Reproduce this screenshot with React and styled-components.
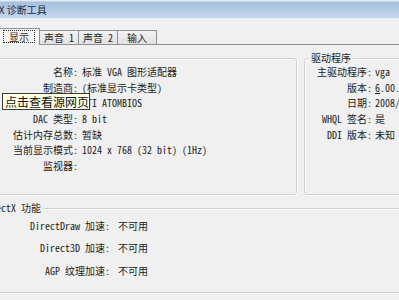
import React from 'react';
import styled, { createGlobalStyle } from 'styled-components';

const Global = createGlobalStyle`
  html, body { margin: 0; padding: 0; background: #f0f0f0; }
  body { font-family: "Noto Sans Mono CJK SC", "Noto Sans CJK SC", monospace; }
`;

const Screen = styled.div`
  position: relative;
  width: 399px;
  height: 300px;
  overflow: hidden;
  background: #f0f0f0;
  font-family: "Noto Sans Mono CJK SC", "Noto Sans CJK SC", monospace;
  font-size: 10px;
  color: #1c1c1c;
`;

const TitleBar = styled.div`
  height: 18px;
  display: flex;
  align-items: center;
  background: linear-gradient(#e2eaf4 0, #e2eaf4 1px, #a5c0e0 2px, #b2c9e5 9px, #c6d7ec 18px);
`;

const TitleText = styled.span`
  margin-left: -29px;
  font-family: "Noto Sans CJK SC", sans-serif;
  font-size: 10px;
  color: #1d2738;
  white-space: nowrap;
`;

const Client = styled.div`
  padding-top: 11px;
  background: linear-gradient(#eef1f5, #f0f0f0 11px);
`;

const TabStrip = styled.div`
  display: flex;
  align-items: flex-end;
  height: 16px;
  margin-left: -2px;
  position: relative;
  z-index: 1;
  margin-bottom: -1px;
`;

const Tab = styled.div`
  box-sizing: border-box;
  width: ${p => (p.$active ? 42 : 40)}px;
  height: ${p => (p.$active ? 17 : 15)}px;
  margin-left: ${p => (p.$active ? 0 : -1)}px;
  display: flex;
  align-items: center;
  justify-content: center;
  border: 1px solid #8d9095;
  border-bottom: ${p => (p.$active ? '1px solid #f7f7f7' : '1px solid #8d9095')};
  background: ${p => (p.$active ? '#f7f7f7' : 'linear-gradient(#f3f3f3, #e1e1e1)')};
  white-space: nowrap;
  padding-bottom: 1px;
`;

const Focus = styled.span`
  outline: 1px dotted #222;
  padding: 0 5px;
  line-height: 11px;
`;

const Panel = styled.div`
  border-top: 1px solid #8d9095;
  background: #f0f0f0;
  padding-top: 13px;
  height: 255px;
`;

const TopRow = styled.div`
  display: flex;
  gap: 7px;
  margin-left: -10px;
`;

const GroupBox = styled.div`
  position: relative;
  box-sizing: border-box;
  flex: none;
  width: ${p => p.$w}px;
  border: 1px solid #d2d2d2;
  border-radius: 3px;
  box-shadow: inset 1px 1px 0 #fbfbfb, 1px 1px 0 #fbfbfb;
  padding: ${p => p.$pad};
`;

const Caption = styled.span`
  position: absolute;
  top: -8px;
  left: ${p => p.$left}px;
  padding: 0 2px;
  background: #f0f0f0;
  white-space: nowrap;
  line-height: 14px;
`;

const Fields = styled.div`
  display: grid;
  grid-template-columns: ${p => p.$labelW}px max-content;
  column-gap: ${p => p.$gap}px;
  grid-auto-rows: ${p => p.$rowH}px;
  align-items: center;
`;

const Label = styled.span`
  text-align: right;
  white-space: nowrap;
`;

const Value = styled.span`
  white-space: nowrap;
`;

const Under = styled.span`
  text-decoration: underline;
`;

const DxBox = styled(GroupBox)`
  margin-left: -10px;
  margin-top: 13px;
`;

const Tooltip = styled.div`
  position: absolute;
  left: 2px;
  top: 93px;
  box-sizing: border-box;
  width: 88px;
  height: 17px;
  border: 1px solid #3a3a3a;
  background: #ffffe6;
  font-family: "Noto Sans CJK SC", sans-serif;
  font-size: 12px;
  line-height: 15px;
  padding-left: 2px;
  color: #111;
  white-space: nowrap;
`;

const device = [
  ['名称:', '标准 VGA 图形适配器'],
  ['制造商:', '(标准显示卡类型)'],
  ['芯片类型:', 'ATI ATOMBIOS'],
  ['DAC 类型:', '8 bit'],
  ['估计内存总数:', '暂缺'],
  ['当前显示模式:', '1024 x 768 (32 bit) (1Hz)'],
  ['监视器:', ''],
];

const driver = [
  ['主驱动程序:', 'vga'],
  ['版本:', <><Under>6</Under>.00.2900.5512</>],
  ['日期:', '2008/4/14 20:00:00'],
  ['WHQL 签名:', '是'],
  ['DDI 版本:', '未知'],
];

const dx = [
  ['DirectDraw 加速:', '不可用'],
  ['Direct3D 加速:', '不可用'],
  ['AGP 纹理加速:', '不可用'],
];

export default function App() {
  return (
    <Screen>
      <Global />
      <TitleBar>
        <TitleText>DirectX 诊断工具</TitleText>
      </TitleBar>
      <Client>
        <TabStrip>
          <Tab $active><Focus>显示</Focus></Tab>
          <Tab>声音 1</Tab>
          <Tab>声音 2</Tab>
          <Tab>输入</Tab>
        </TabStrip>
        <Panel>
          <TopRow>
            <GroupBox $w={307} $pad="5px 0 21px 0">
              <Caption $left={-70}>设备</Caption>
              <Fields $labelW={87} $gap={4} $rowH={15.6}>
                {device.map(([l, v]) => (
                  <React.Fragment key={l}>
                    <Label>{l}</Label>
                    <Value>{v}</Value>
                  </React.Fragment>
                ))}
              </Fields>
            </GroupBox>
            <GroupBox $w={130} $pad="5px 0 21px 0">
              <Caption $left={4}>驱动程序</Caption>
              <Fields $labelW={67} $gap={3} $rowH={15.6}>
                {driver.map(([l, v]) => (
                  <React.Fragment key={l}>
                    <Label>{l}</Label>
                    <Value>{v}</Value>
                  </React.Fragment>
                ))}
              </Fields>
            </GroupBox>
          </TopRow>
          <DxBox $w={430} $pad="5px 0 10px 0">
            <Caption $left={-12}>DirectX 功能</Caption>
            <Fields $labelW={119} $gap={8} $rowH={22.5}>
              {dx.map(([l, v]) => (
                <React.Fragment key={l}>
                  <Label>{l}</Label>
                  <Value>{v}</Value>
                </React.Fragment>
              ))}
            </Fields>
          </DxBox>
        </Panel>
      </Client>
      <Tooltip>点击查看源网页</Tooltip>
    </Screen>
  );
}
